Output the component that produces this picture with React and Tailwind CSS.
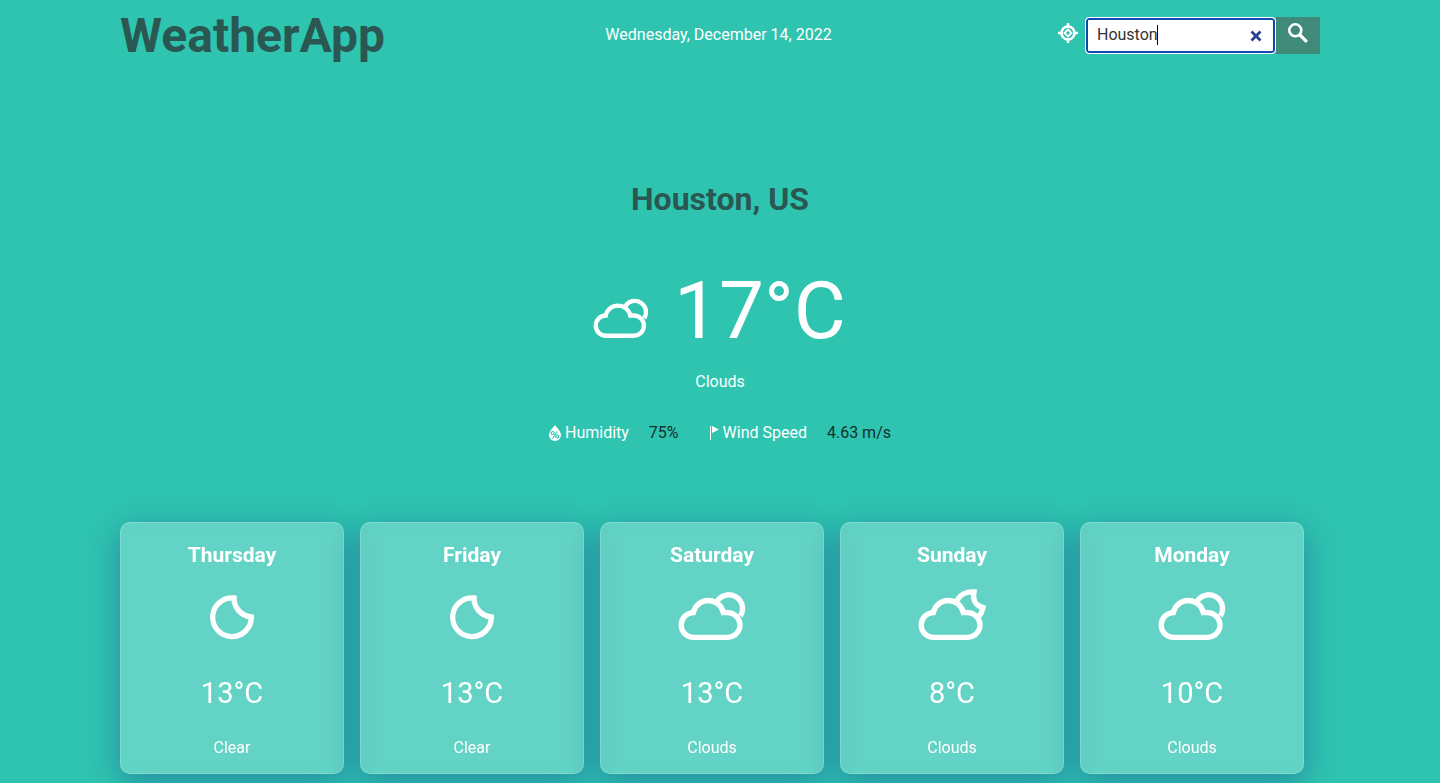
import { useState } from "react";

const days = [
  { name: "Thursday", icon: "moon", temp: "13°C", text: "Clear" },
  { name: "Friday", icon: "moon", temp: "13°C", text: "Clear" },
  { name: "Saturday", icon: "clouds", temp: "13°C", text: "Clouds" },
  { name: "Sunday", icon: "cloudMoon", temp: "8°C", text: "Clouds" },
  { name: "Monday", icon: "clouds", temp: "10°C", text: "Clouds" },
];

const shapes = {
  moon: "M138 24A58 58 0 1 0 190 81C158 77 138 53 138 24Z",
  cloud:
    "M77 142A37 37 0 0 1 76 68A46 46 0 0 1 166 68H179A37 37 0 0 1 179 142Z",
  sun: "M148 33A40 40 0 0 1 217 78",
  crescent: "M147 32C156 14 176 4 198 6C193 30 204 48 225 53C222 64 219 72 214 78",
};

function WeatherIcon({ kind, className }) {
  return (
    <svg
      viewBox="12 0 240 165"
      className={className}
      fill="none"
      stroke="currentColor"
      strokeWidth="16"
      overflow="visible"
      aria-hidden="true"
    >
      {kind === "moon" ? (
        <path d={shapes.moon} />
      ) : (
        <>
          <path d={shapes.cloud} />
          <path d={kind === "clouds" ? shapes.sun : shapes.crescent} />
        </>
      )}
    </svg>
  );
}

function TargetIcon() {
  return (
    <svg viewBox="0 0 20 20" className="size-5" fill="none" stroke="currentColor" strokeWidth="2.600" aria-hidden="true">
      <circle cx="10" cy="10" r="6.500" />
      <path d="M10 0v5M10 15v5M0 10h5M15 10h5" />
      <path d="M10 6.500L13.500 10L10 13.500L6.500 10Z" strokeWidth="1.800" />
    </svg>
  );
}

function DropIcon() {
  return (
    <svg viewBox="0 0 12 16" className="h-4 w-3" aria-hidden="true">
      <path d="M6 0C4 3 0 6.500 0 10a6 6 0 0 0 12 0C12 6.500 8 3 6 0Z" fill="currentColor" />
      <g fill="none" stroke="#2ec4b0" strokeWidth="1.200">
        <circle cx="3.700" cy="8" r="1.500" />
        <circle cx="8.300" cy="11.500" r="1.500" />
        <path d="M8.500 6.500l-5 7" />
      </g>
    </svg>
  );
}

function FlagIcon() {
  return (
    <svg viewBox="0 0 10 14" className="h-3.5 w-2.5" fill="currentColor" aria-hidden="true">
      <path d="M1 0H2V14H1ZM3 0L10 3.500L3 7Z" />
    </svg>
  );
}

export default function App() {
  const [city, setCity] = useState("Houston");
  return (
    <div className="min-h-screen bg-[#2ec4b0] pb-2 font-[Roboto,sans-serif] text-base text-white">
      <div className="mx-auto w-full max-w-[1200px]">
        <header className="flex items-start justify-between">
          <h1 className="text-5xl leading-[72px] font-bold text-[#2a5752]">WeatherApp</h1>
          <p className="pt-[23px] leading-6">Wednesday, December 14, 2022</p>
          <form className="flex pt-[17px] pl-1.5" onSubmit={(e) => e.preventDefault()}>
            <button type="button" aria-label="Use my location" className="mt-1.5 mr-[7px] size-5">
              <TargetIcon />
            </button>
            <div className="relative">
              <input
                aria-label="City"
                value={city}
                onChange={(e) => setCity(e.target.value)}
                className="h-[37px] w-[191px] rounded border border-white bg-white pr-9 pb-0.5 pl-[11px] text-[#333] ring-2 ring-[#1048b0] outline-none ring-inset"
              />
              {city === "Houston" && <span className="absolute top-2 left-[72px] h-5 w-px bg-black" />}
              <button
                type="button"
                aria-label="Clear"
                onClick={() => setCity("")}
                className="absolute top-[13px] right-3.5 size-3 text-[#27418c]"
              >
                <svg viewBox="0 0 12 12" className="size-3" stroke="currentColor" strokeWidth="2.800" aria-hidden="true">
                  <path d="M1.500 1.500l9 9M10.500 1.500l-9 9" />
                </svg>
              </button>
            </div>
            <button aria-label="Search" className="flex h-[37px] w-11 justify-center bg-[#408a7a] pt-1.5">
              <svg viewBox="0 0 20 20" className="size-5" fill="none" stroke="currentColor" aria-hidden="true">
                <circle cx="7.300" cy="7.300" r="6" strokeWidth="2.600" />
                <path d="M11.500 11.500l7.300 7.300" strokeWidth="3.200" />
              </svg>
            </button>
          </form>
        </header>

        <main>
          <section className="flex flex-col items-center pt-[103px]">
            <h2 className="text-[32px] leading-12 font-bold text-[#2a5752]">Houston, US</h2>
            <div className="flex items-center pt-[29px] pr-1.5">
              <WeatherIcon kind="clouds" className="mt-4 mr-5 h-[45px] w-[66px]" />
              <span className="text-[80px] leading-[118px]">17°C</span>
            </div>
            <p className="leading-6">Clouds</p>
            <dl className="flex pt-[27px] leading-6">
              <dt className="flex items-center gap-1">
                <DropIcon />
                Humidity
              </dt>
              <dd className="pl-5 text-[#14302d]">75%</dd>
              <dt className="ml-[30px] flex items-center gap-1">
                <FlagIcon />
                Wind Speed
              </dt>
              <dd className="pl-5 text-[#14302d]">4.63 m/s</dd>
            </dl>
          </section>

          <section className="grid grid-cols-5 pt-[77px]">
            {days.map((day) => (
              <article
                key={day.name}
                className="mr-4 flex flex-col items-center rounded-[10px] border border-white/20 bg-white/25 pt-4 pb-[13px] shadow-[0_8px_32px_0_rgba(31,38,135,0.37)] backdrop-blur-xs"
              >
                <h3 className="text-[21px] leading-8 font-bold">{day.name}</h3>
                <WeatherIcon kind={day.icon} className="mt-[19px] h-[55px] w-20" />
                <p className="pt-[26px] text-[29px] leading-[45px]">{day.temp}</p>
                <p className="pt-5 leading-6">{day.text}</p>
              </article>
            ))}
          </section>
        </main>
      </div>
    </div>
  );
}
